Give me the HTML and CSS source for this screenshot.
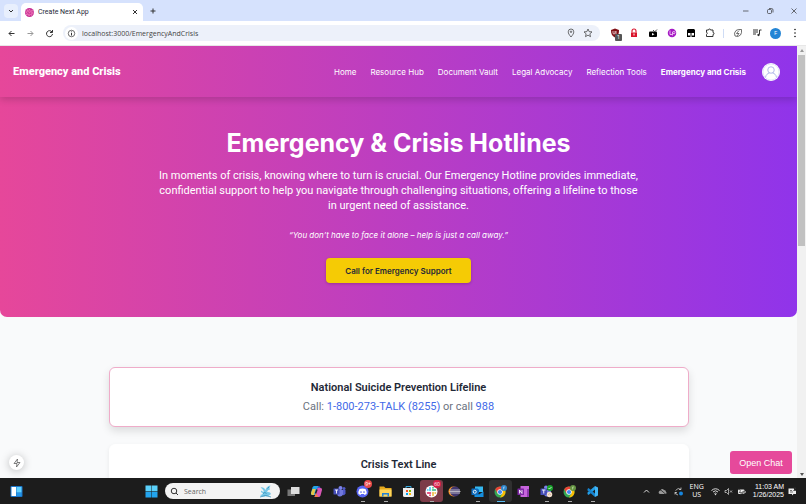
FILE: index.html
```html
<!DOCTYPE html>
<html lang="en">
<head>
<meta charset="utf-8">
<meta name="viewport" content="width=device-width, initial-scale=1">
<title>Create Next App</title>
<link rel="stylesheet" href="styles.css">
</head>
<body>
<div class="tabs">
  <button class="tab-search" aria-label="Search tabs"><svg class="i8" viewBox="0 0 16 16"><path class="line bold" d="M4 6l4 4 4-4"/></svg></button>
  <div class="tab">
    <svg class="i9" viewBox="0 0 18 18"><circle cx="9" cy="9" r="9" fill="#c52f96"/><path d="M4 3l3 4 2-5 2 5 4-3-2 5 4 1-4 1 1 4-4-3-2 4-1-4-5 2 3-4-4-2 4-1z" fill="none" stroke="#f58abb" stroke-width="1.3"/><circle cx="9" cy="9" r="2" fill="#ee6fae"/></svg>
    <span class="tab-name">Create Next App</span>
    <button aria-label="Close tab"><svg class="i8" viewBox="0 0 16 16"><path class="line bold" d="M4 4l8 8M12 4l-8 8"/></svg></button>
  </div>
  <button class="new-tab" aria-label="New tab"><svg class="i8" viewBox="0 0 16 16"><path class="line bold" d="M8 3v10M3 8h10"/></svg></button>
  <div class="window-buttons">
    <button aria-label="Minimize"><svg class="i8" viewBox="0 0 16 16"><path class="line" d="M2 8h11"/></svg></button>
    <button aria-label="Restore"><svg class="i8" viewBox="0 0 16 16"><rect class="line" x="3" y="5" width="8" height="8" rx="2"/><path class="line" d="M6 3h5q3 0 3 3v5"/></svg></button>
    <button aria-label="Close"><svg class="i8" viewBox="0 0 16 16"><path class="line" d="M3 3l10 10M13 3L3 13"/></svg></button>
  </div>
</div>
<div class="toolbar">
  <button class="cell" aria-label="Back"><svg class="i9" viewBox="0 0 18 18"><path class="line bold" d="M15 9H4M9 4L4 9l5 5"/></svg></button>
  <button class="cell dim" aria-label="Forward"><svg class="i9" viewBox="0 0 18 18"><path class="line bold" d="M3 9h11M9 4l5 5-5 5"/></svg></button>
  <button class="cell" aria-label="Reload"><svg class="i9" viewBox="0 0 18 18"><path class="line bold" d="M14 6a6 6 0 1 0 1 4M15 2v5h-5"/></svg></button>
  <div class="address">
    <button class="site-info" aria-label="Site information"><svg class="i9" viewBox="0 0 18 18"><circle class="line" cx="9" cy="9" r="6.5"/><path class="line bold" d="M9 8v5M9 5v1.5"/></svg></button>
    <input class="url" aria-label="Address" value="localhost:3000/EmergencyAndCrisis">
    <div class="address-actions">
      <button aria-label="Location"><svg class="i10" viewBox="0 0 20 20"><path class="line" d="M10 18C6 13 4.500 11 4.500 7.500a5.500 5.500 0 0 1 11 0C15.500 11 14 13 10 18z"/><circle class="line" cx="10" cy="7.500" r="1.500"/></svg></button>
      <button aria-label="Bookmark"><svg class="i10" viewBox="0 0 20 20"><path class="line" d="M10 2l2.300 5.300 5.700.5-4.300 3.800 1.300 5.700-5-3-5 3 1.300-5.700L2 7.800l5.700-.5z"/></svg></button>
    </div>
  </div>
  <div class="extensions">
    <button class="cell badge-host" aria-label="Content blocker"><svg class="i10" viewBox="0 0 20 20"><path d="M10 1l8 3c0 8-2 12-8 15C4 16 2 12 2 4z" fill="#800f14"/><path d="M6 6v4q0 2 2 2t2-2V6m2 0v6" fill="none" stroke="#fff" stroke-width="1.400"/></svg><span class="badge">1</span></button>
    <button class="cell" aria-label="Lock"><svg class="i10" viewBox="0 0 20 20"><path d="M6 9V6a4 4 0 0 1 8 0v3" fill="none" stroke="#d9132b" stroke-width="2.200"/><rect x="4" y="9" width="12" height="9" fill="#d9132b"/><path d="M10 11v4" stroke="#fff" stroke-width="2"/></svg></button>
    <button class="cell" aria-label="Video"><svg class="i10" viewBox="0 0 20 20"><rect x="2" y="7" width="16" height="11" rx="2"/><path d="M13 7L10 4M14 7l4-4" stroke="#111" stroke-width="1.500"/><path d="M8 10v5l5-2.500z" fill="#fff"/></svg></button>
    <button class="cell" aria-label="Language practice"><svg class="i10" viewBox="0 0 20 20"><circle cx="10" cy="10" r="8.500" fill="#a51ac4"/><path d="M6 5v8h4M11 15V8q5-3 5 1t-4 2" fill="none" stroke="#f0c5f4" stroke-width="1.800"/></svg></button>
    <button class="cell" aria-label="Scripts"><svg class="i10" viewBox="0 0 20 20"><path d="M4 2h12l2 2v14H2V4z"/><path d="M4 10h5v5H4zM11 10h5v5h-5zM9 15h2v3H9z" fill="#fff"/></svg></button>
    <button class="cell" aria-label="Extensions"><svg class="i10" viewBox="0 0 20 20"><path class="line bold" d="M3 4h4a2 2 0 0 1 4 0h5v5a2 2 0 0 1 0 4v4H3v-4q3-2 0-5z"/></svg></button>
  </div>
  <span class="divider"></span>
  <button class="cell" aria-label="Energy saver"><svg class="i10" viewBox="0 0 20 20"><path class="line" d="M4 16q-3-6 2-11 4-3 11-2 1 7-2 11-5 5-11 2zM12 5l-5 6h5l-4 5"/></svg></button>
  <button class="cell" aria-label="Media"><svg class="i10" viewBox="0 0 20 20"><path class="line bold" d="M2 4h10M2 8h10M2 12h6M15 13V4h4"/><circle cx="13" cy="14" r="2.300" fill="#333"/></svg></button>
  <button class="cell" aria-label="Profile"><span class="profile">F</span></button>
  <button class="cell" aria-label="Menu"><svg class="i10" viewBox="0 0 20 20"><circle cx="10" cy="3" r="1.500"/><circle cx="10" cy="10" r="1.500"/><circle cx="10" cy="17" r="1.500"/></svg></button>
</div>

<div class="viewport">
  <div class="page">
    <header class="site-header">
      <a class="brand" href="#">Emergency and Crisis</a>
      <nav class="nav">
        <a href="#">Home</a><a href="#">Resource Hub</a><a href="#">Document Vault</a><a href="#">Legal Advocacy</a><a href="#">Reflection Tools</a><a class="current" href="#">Emergency and Crisis</a>
        <a class="account" href="#" aria-label="Account"><svg viewBox="0 0 36 36"><circle cx="18" cy="18" r="18" fill="#fff"/><g fill="none" stroke="#a9b1e8" stroke-width="1.800"><circle cx="18" cy="18" r="16" stroke="#dfe3f8"/><circle cx="18" cy="14" r="6.500"/><path d="M7 29c1-6 4-8 8-9M29 29c-1-6-4-8-8-9"/></g></svg></a>
      </nav>
    </header>
    <section class="hero">
      <h1>Emergency &amp; Crisis Hotlines</h1>
      <p class="lead">In moments of crisis, knowing where to turn is crucial. Our Emergency Hotline provides immediate, confidential support to help you navigate through challenging situations, offering a lifeline to those in urgent need of assistance.</p>
      <p class="quote">“You don’t have to face it alone – help is just a call away.”</p>
      <button class="call">Call for Emergency Support</button>
    </section>
    <main class="hotlines">
      <article class="card selected">
        <h2>National Suicide Prevention Lifeline</h2>
        <p>Call: <a href="#">1-800-273-TALK (8255)</a> or call <a href="#">988</a></p>
      </article>
      <article class="card">
        <h2>Crisis Text Line</h2>
      </article>
    </main>
  </div>
  <div class="scrollbar"><span class="arrow up"></span><span class="thumb"></span><span class="arrow down"></span></div>
  <button class="dev-badge" aria-label="Static route"><svg class="i10" viewBox="0 0 20 20"><path d="M11 2L4 11h6L9 18l7-9h-6z" fill="none" stroke="#555" stroke-width="1.500"/></svg></button>
  <button class="chat">Open Chat</button>
</div>

<footer class="taskbar">
  <button class="widgets" aria-label="Widgets"><svg class="i13" viewBox="0 0 26 26"><rect x="1" y="2" width="24" height="22" rx="2" fill="#1b75c8"/><rect x="3" y="4" width="9" height="18" fill="#fff"/><rect x="13" y="4" width="10" height="11" fill="#5fd0ff"/><rect x="13" y="16" width="10" height="6" fill="#2196ea"/></svg></button>
  <div class="apps">
    <button class="app" aria-label="Start"><svg class="i13" viewBox="0 0 26 26"><path d="M1 1h11.500v11.500H1zM13.500 1H25v11.500H13.500z" fill="#5bd1fb"/><path d="M1 13.500h11.500V25H1zM13.500 13.500H25V25H13.500z" fill="#22a4ee"/></svg></button>
    <label class="search"><svg class="i9" viewBox="0 0 18 18"><circle class="line bold" cx="8" cy="8" r="5.500"/><path class="line bold" d="M12 12l4 4"/></svg><input aria-label="Search" placeholder="Search"><svg class="i13" viewBox="0 0 26 26"><path d="M3 5q7-2 10 5 2-8 10-9-3 4-1 8-5 0-6 5 7-1 8 4-4 5-14 5-5 0-8-3 5 0 6-4-5-1-4-5 3 3 6 2-3-6-7-8z" fill="#78c7e6"/><path d="M2 24q11-6 22 0M8 17q4-4 7 0M17 7l3-3" fill="none" stroke="#278ab5" stroke-width="1.500"/></svg></label>
    <button class="app" aria-label="Task view"><svg class="i13" viewBox="0 0 26 26"><rect x="1" y="9" width="15" height="13" fill="#777"/><rect x="8" y="4" width="17" height="14" fill="#ddd"/></svg></button>
    <button class="app" aria-label="Copilot"><svg class="i13" viewBox="0 0 26 26"><path d="M8 2h9l-6 18H5q-4 0-3-4L5 5q1-3 3-3z" fill="#24a5e9"/><path d="M2 16l3-8 6 0-3 12H5q-4 0-3-4z" fill="#e7c646"/><path d="M15 6h6q4 0 3 4l-3 11q-1 3-4 3H9z" fill="#d856b5"/><path d="M15 6l2-4q3 0 4 4z" fill="#385bd0"/><path d="M9 24l3-8 5 8z" fill="#f47a4a"/><path d="M14 9l-3 8" stroke="#222" stroke-width="3"/></svg></button>
    <button class="app" aria-label="Teams"><svg class="i13" viewBox="0 0 26 26"><circle cx="15" cy="6" r="4" fill="#7b83eb"/><circle cx="22" cy="7" r="3" fill="#5059c9"/><path d="M18 10h7v7q-2 5-7 3z" fill="#5059c9"/><path d="M8 10h12v8q-2 6-7 5-5-1-5-6z" fill="#7078dc"/><rect x="1" y="7" width="12" height="12" rx="1" fill="#464eb8"/><path d="M4 10h6M7 10v7" stroke="#fff" stroke-width="1.800"/></svg></button>
    <button class="app open badge-host" aria-label="Discord"><svg class="i13" viewBox="0 0 26 26"><circle cx="13" cy="13" r="12" fill="#5865f2"/><path d="M7 8q6-2 12 0 3 5 2 10l-4 2-1-2h-6l-1 2-4-2q-1-5 2-10z" fill="#fff"/><circle cx="10" cy="14" r="1.700" fill="#5865f2"/><circle cx="16" cy="14" r="1.700" fill="#5865f2"/></svg><span class="count">9+</span></button>
    <button class="app open" aria-label="File Explorer"><svg class="i13" viewBox="0 0 26 26"><path d="M1 3h9l3 3h12v17H1z" fill="#e5a91d"/><path d="M1 9h24v14H1z" fill="#ffd65a"/><path d="M6 16h14v7H6z" fill="#2383d6"/><path d="M9 19h8v4H9z" fill="#ffd65a"/></svg></button>
    <button class="app" aria-label="Store"><svg class="i13" viewBox="0 0 26 26"><path d="M8 7V3h10v4" fill="none" stroke="#36a9df" stroke-width="2"/><path d="M2 6h22v15q0 3-3 3H5q-3 0-3-3z" fill="#eee"/><path d="M8 10h4v4H8z" fill="#f25022"/><path d="M14 10h4v4h-4z" fill="#7fba00"/><path d="M8 16h4v4H8z" fill="#00a4ef"/><path d="M14 16h4v4h-4z" fill="#ffb900"/></svg></button>
    <button class="app open alert badge-host" aria-label="Slack"><svg class="i13" viewBox="0 0 26 26"><circle cx="13" cy="13" r="12" fill="#fff"/><g fill="none" stroke-width="3" stroke-linecap="round"><path d="M10 5v6M5 10h1" stroke="#36c5f0"/><path d="M15 10h6M16 5v1" stroke="#2eb67d"/><path d="M16 15v6M20 16h1" stroke="#ecb22e"/><path d="M5 16h6M10 20v1" stroke="#e01e5a"/></g></svg><span class="count slack">60</span></button>
    <button class="app" aria-label="Eclipse"><svg class="i13" viewBox="0 0 26 26"><circle cx="11" cy="13" r="10" fill="#f5952d"/><circle cx="14" cy="13" r="10" fill="#40366f"/><path d="M4 10h20M3 13h22M4 16h20" stroke="#ddd" stroke-width="1.500"/></svg></button>
    <button class="app open" aria-label="Outlook"><svg class="i13" viewBox="0 0 26 26"><path d="M8 3h16v11H8z" fill="#35b8f1"/><path d="M8 9h8v8H8z" fill="#0364b8"/><path d="M7 14l9 5 9-6v11H7z" fill="#148ddd"/><rect x="1" y="7" width="13" height="13" rx="1" fill="#0f6cbd"/><circle cx="7.500" cy="13.500" r="3" fill="none" stroke="#fff" stroke-width="1.800"/></svg></button>
    <button class="app active" aria-label="Chrome, profile F"><svg class="i13" viewBox="0 0 26 26"><circle cx="12" cy="14" r="11" fill="#34a853"/><path d="M2.500 8.500A11 11 0 0 1 21.500 8.500H12L7 17z" fill="#ea4335"/><path d="M21.500 8.500A11 11 0 0 1 12 25l5-8-3-8.500z" fill="#fbbc04"/><circle cx="12" cy="14" r="5.500" fill="#fff"/><circle cx="12" cy="14" r="4.200" fill="#4285f4"/><circle cx="20" cy="6" r="6" fill="#3187cb"/><path d="M19 9V4h3M19 6h2" fill="none" stroke="#cfeaff"/></svg></button>
    <button class="app" aria-label="OneNote"><svg class="i13" viewBox="0 0 26 26"><path d="M7 2h17v22H7z" fill="#c764dd"/><path d="M20 8h4v16h-4z" fill="#8f38af"/><rect x="1" y="7" width="13" height="13" rx="1" fill="#7e25a6"/><path d="M5 17v-7l5 7v-7" fill="none" stroke="#fff" stroke-width="1.700"/></svg></button>
    <button class="app open" aria-label="Teams work"><svg class="i13" viewBox="0 0 26 26"><path d="M8 10h14v9q-4 5-9 4-5-1-5-6z" fill="#7078dc"/><circle cx="12" cy="5" r="4" fill="#7b83eb"/><rect x="1" y="7" width="13" height="13" rx="1" fill="#464eb8"/><path d="M4 10h7M7.500 10v7" stroke="#fff" stroke-width="1.800"/><circle cx="20" cy="6" r="6" fill="#19a22c"/><path d="M17 6l2 2 4-4" fill="none" stroke="#fff" stroke-width="1.500"/><circle cx="19" cy="19" r="5.500" fill="#f3dfce"/><path d="M16 20q3-5 6 0" fill="none" stroke="#b98669"/></svg></button>
    <button class="app open" aria-label="Chrome, second profile"><svg class="i13" viewBox="0 0 26 26"><circle cx="12" cy="14" r="11" fill="#34a853"/><path d="M2.500 8.500A11 11 0 0 1 21.500 8.500H12L7 17z" fill="#ea4335"/><path d="M21.500 8.500A11 11 0 0 1 12 25l5-8-3-8.500z" fill="#fbbc04"/><circle cx="12" cy="14" r="5.500" fill="#fff"/><circle cx="12" cy="14" r="4.200" fill="#4285f4"/><circle cx="20" cy="6" r="6" fill="#649342"/><path d="M19 9V4h3M19 6h2" fill="none" stroke="#d7f1be"/></svg></button>
    <button class="app open" aria-label="Visual Studio Code"><svg class="i13" viewBox="0 0 26 26"><path d="M18 2L3 15v3l2 2L18 9z" fill="#239ee5"/><path d="M18 24L3 11V8l2-2 13 11z" fill="#1684cf"/><path d="M18 2l6 3v16l-6 3z" fill="#41b4f5"/></svg></button>
  </div>
  <div class="tray">
    <svg class="i9" viewBox="0 0 18 18"><path class="line bold light" d="M4 11l5-5 5 5"/></svg>
    <svg class="i9" viewBox="0 0 18 18"><path d="M4 14q-4-1-2-5 1-2 3-2 3-5 7-1 4 0 4 4 3 3-1 4z" fill="#999"/><path d="M2 3l14 12" stroke="#222" stroke-width="1.500"/></svg>
    <svg class="i9" viewBox="0 0 18 18"><path class="line light" d="M3 7q5-7 11-2M14 1v4h-4M2 10q1 5 6 6M2 15v-4h4"/><circle cx="14" cy="13" r="4" fill="#1686df"/></svg>
    <span class="language">ENG<br>US</span>
    <span class="status">
      <svg class="i9" viewBox="0 0 18 18"><path class="line bold light" d="M1 7q8-7 16 0M4 10q5-5 10 0M7 13q2-2 4 0"/><circle cx="9" cy="15" r="1.500" fill="#ddd"/></svg>
      <svg class="i9" viewBox="0 0 18 18"><path class="line light" d="M2 7h3l4-4v12l-4-4H2zM12 7l4 4M16 7l-4 4"/></svg>
      <svg class="i9" viewBox="0 0 18 18"><rect x="2" y="5" width="13" height="9" rx="2" fill="#eee"/><path d="M16 8v4" stroke="#eee" stroke-width="2"/><path d="M4 3l3 5-3 3h5l-2 5M10 13q0-5 5-5-1 6-5 5" fill="none" stroke="#333" stroke-width="1.400"/></svg>
    </span>
    <span class="clock">11:03 AM<br>1/26/2025</span>
    <svg class="i9" viewBox="0 0 18 18"><path d="M1 3h11v4h4v7h-5l-3 3v-3H1z" fill="#eee"/><path d="M11 2h5l-5 5h5M4 7h4M4 10h6" fill="none" stroke="#333" stroke-width="1.300"/></svg>
  </div>
</footer>
</body>
</html>
```
FILE: styles.css
```css
* { box-sizing: border-box; }
body {
  margin: 0;
  height: 100vh;
  display: flex;
  flex-direction: column;
  overflow: hidden;
  font-family: "Open Sans", "Noto Sans", sans-serif;
  font-size: 7px;
  color: #1f2937;
}
button, input { font: inherit; color: inherit; border: 0; padding: 0; background: none; }
button { display: flex; align-items: center; justify-content: center; flex: none; }
input { outline: 0; min-width: 0; }
a { color: inherit; text-decoration: none; }
svg { display: block; flex: none; }
h1, h2, p { margin: 0; }
.i8 { width: 8px; height: 8px; }
.i9 { width: 9px; height: 9px; }
.i10 { width: 10px; height: 10px; }
.i13 { width: 13px; height: 13px; }
.line { fill: none; stroke: #333; stroke-width: 1.4; }
.line.bold { stroke-width: 2; }
.line.light { stroke: #ddd; }

.tabs { display: flex; align-items: center; height: 21px; flex: none; padding-left: 4px; background: #d6e2fd; }
.tab-search { width: 14px; height: 14px; border-radius: 4px; background: #e8effd; }
.tab { display: flex; align-items: center; gap: 4px; width: 122px; height: 18px; align-self: flex-end; margin-left: 3px; padding: 0 4px; border-radius: 5px 5px 0 0; background: #fff; }
.tab-name { flex: 1; font-family: Roboto, sans-serif; }
.new-tab { margin-left: 6px; }
.window-buttons { display: flex; margin-left: auto; }
.window-buttons button { width: 24px; }

.toolbar { display: flex; align-items: center; height: 25px; flex: none; padding: 0 2px; background: #fff; border-bottom: 1px solid #e7e7e7; }
.cell { width: 19px; height: 16px; }
.dim { opacity: .5; }
.address { display: flex; align-items: center; gap: 4px; flex: 1; height: 16px; margin: 0 5px 0 4px; padding: 0 7px 0 2px; border-radius: 8px; background: #edf1fa; }
.address-actions { display: flex; gap: 7px; }
.site-info { width: 13px; height: 13px; border-radius: 50%; background: #fff; }
.url { flex: 1; color: #444; }
.extensions { display: flex; }
.badge-host { position: relative; }
.badge { position: absolute; right: 2px; bottom: 0; width: 7px; height: 7px; border-radius: 1px; background: #555; color: #fff; font-size: 6px; line-height: 7px; }
.divider { width: 1px; height: 9px; margin: 0 4px; background: #cfdcf5; }
.profile { width: 11px; height: 11px; border-radius: 50%; background: #2485d5; color: #fff; font-size: 6px; line-height: 11px; }

.viewport { position: relative; display: flex; flex: 1; min-height: 0; }
.page { flex: 1; min-width: 0; overflow: hidden; background: #f9fafb; font-family: Inter, sans-serif; }
.site-header, .hero { background: linear-gradient(to right, #e6479a, #9034ea); color: #fff; }
.site-header { position: relative; display: flex; align-items: center; justify-content: space-between; height: 51px; padding: 0 17px 0 13px; box-shadow: 0 3px 7px rgba(0, 0, 0, .16); }
.brand { font-family: Roboto, sans-serif; font-size: 11px; font-weight: 800; }
.nav { display: flex; align-items: center; gap: 14px; font-size: 8px; }
.current { font-weight: 700; }
.account { margin-left: 2px; }
.account svg { width: 18px; height: 18px; }
.hero { display: flex; flex-direction: column; align-items: center; padding: 31px 16px 34px; border-radius: 0 0 7px 7px; text-align: center; }
h1 { font-size: 25px; line-height: 30px; font-weight: 700; }
.lead { max-width: 480px; margin-top: 10px; font-family: Roboto, sans-serif; font-size: 11px; line-height: 15px; }
.quote { margin-top: 16px; font-size: 8px; line-height: 12px; font-style: italic; }
.call { height: 25px; margin-top: 17px; padding: 0 19px; border-radius: 4px; background: #f5cb05; color: #1f2937; font-size: 8px; font-weight: 600; box-shadow: 0 1px 3px rgba(0, 0, 0, .2); }
.hotlines { display: flex; flex-direction: column; gap: 17px; max-width: 580px; margin: 50px auto 0; }
.card { min-height: 60px; padding: 12px 16px 10px; border: 1px solid #fff; border-radius: 6px; background: #fff; text-align: center; box-shadow: 0 2px 5px rgba(0, 0, 0, .07); }
.card.selected { border-color: #efacc9; box-shadow: 0 4px 8px rgba(0, 0, 0, .12); }
h2 { font-family: Roboto, sans-serif; font-size: 11px; line-height: 16px; font-weight: 600; }
.card p { margin-top: 3px; font-family: Roboto, sans-serif; font-size: 11px; line-height: 16px; color: #6b7280; }
.card a { color: #4269e8; }

.scrollbar { display: flex; flex-direction: column; align-items: center; width: 9px; background: #f1f1f1; }
.thumb { width: 7px; height: 191px; margin: 3px 0 auto; background: #c1c1c1; }
.arrow { border: 2px solid transparent; }
.up { border-bottom: 3px solid #999; margin-top: 1px; }
.down { border-top: 3px solid #555; }
.dev-badge { position: absolute; left: 9px; bottom: 8px; width: 15px; height: 15px; border-radius: 50%; background: #fff; box-shadow: 0 1px 8px rgba(0, 0, 0, .25); }
.chat { position: absolute; right: 14px; bottom: 4px; width: 62px; height: 23px; border-radius: 3px; background: #e6499b; color: #fff; font-family: "Liberation Sans", sans-serif; font-size: 9px; }

.taskbar { display: flex; align-items: center; height: 26px; flex: none; padding: 0 10px; background: #1c1c1c; }
.apps { display: flex; align-items: center; margin-left: 117px; }
.app { width: 23px; height: 22px; border-radius: 3px; border-bottom: 2px solid transparent; border-top: 2px solid transparent; background-repeat: no-repeat; background-origin: border-box; }
.open { background-image: linear-gradient(#aaa, #aaa); background-size: 4px 1px; background-position: center bottom; }
.active { background-color: #303030; background-image: linear-gradient(#58baf0, #58baf0); background-size: 8px 1px; background-position: center bottom; }
.alert { background-color: #7c3b48; }
.count { position: absolute; top: -2px; right: 2px; width: 8px; height: 8px; border-radius: 50%; background: #e84b4b; color: #fff; font-size: 5px; line-height: 8px; }
.slack { background: #d81d48; }
.search { display: flex; align-items: center; gap: 5px; width: 115px; height: 16px; margin: 0 2px 0 2px; padding: 0 8px 0 5px; border-radius: 8px; background: #f3f3f3; }
.search input { flex: 1; width: 20px; }
.search input::placeholder { color: #666; opacity: 1; }
.tray { display: flex; align-items: center; gap: 7px; margin-left: auto; color: #fff; line-height: 8px; }
.language { text-align: center; }
.status { display: flex; gap: 4px; }
.clock { text-align: right; font-family: "Liberation Sans", sans-serif; font-size: 7px; }
.tray > :last-child { margin-left: -3px; }
.taskbar { padding-right: 9px; }
```
